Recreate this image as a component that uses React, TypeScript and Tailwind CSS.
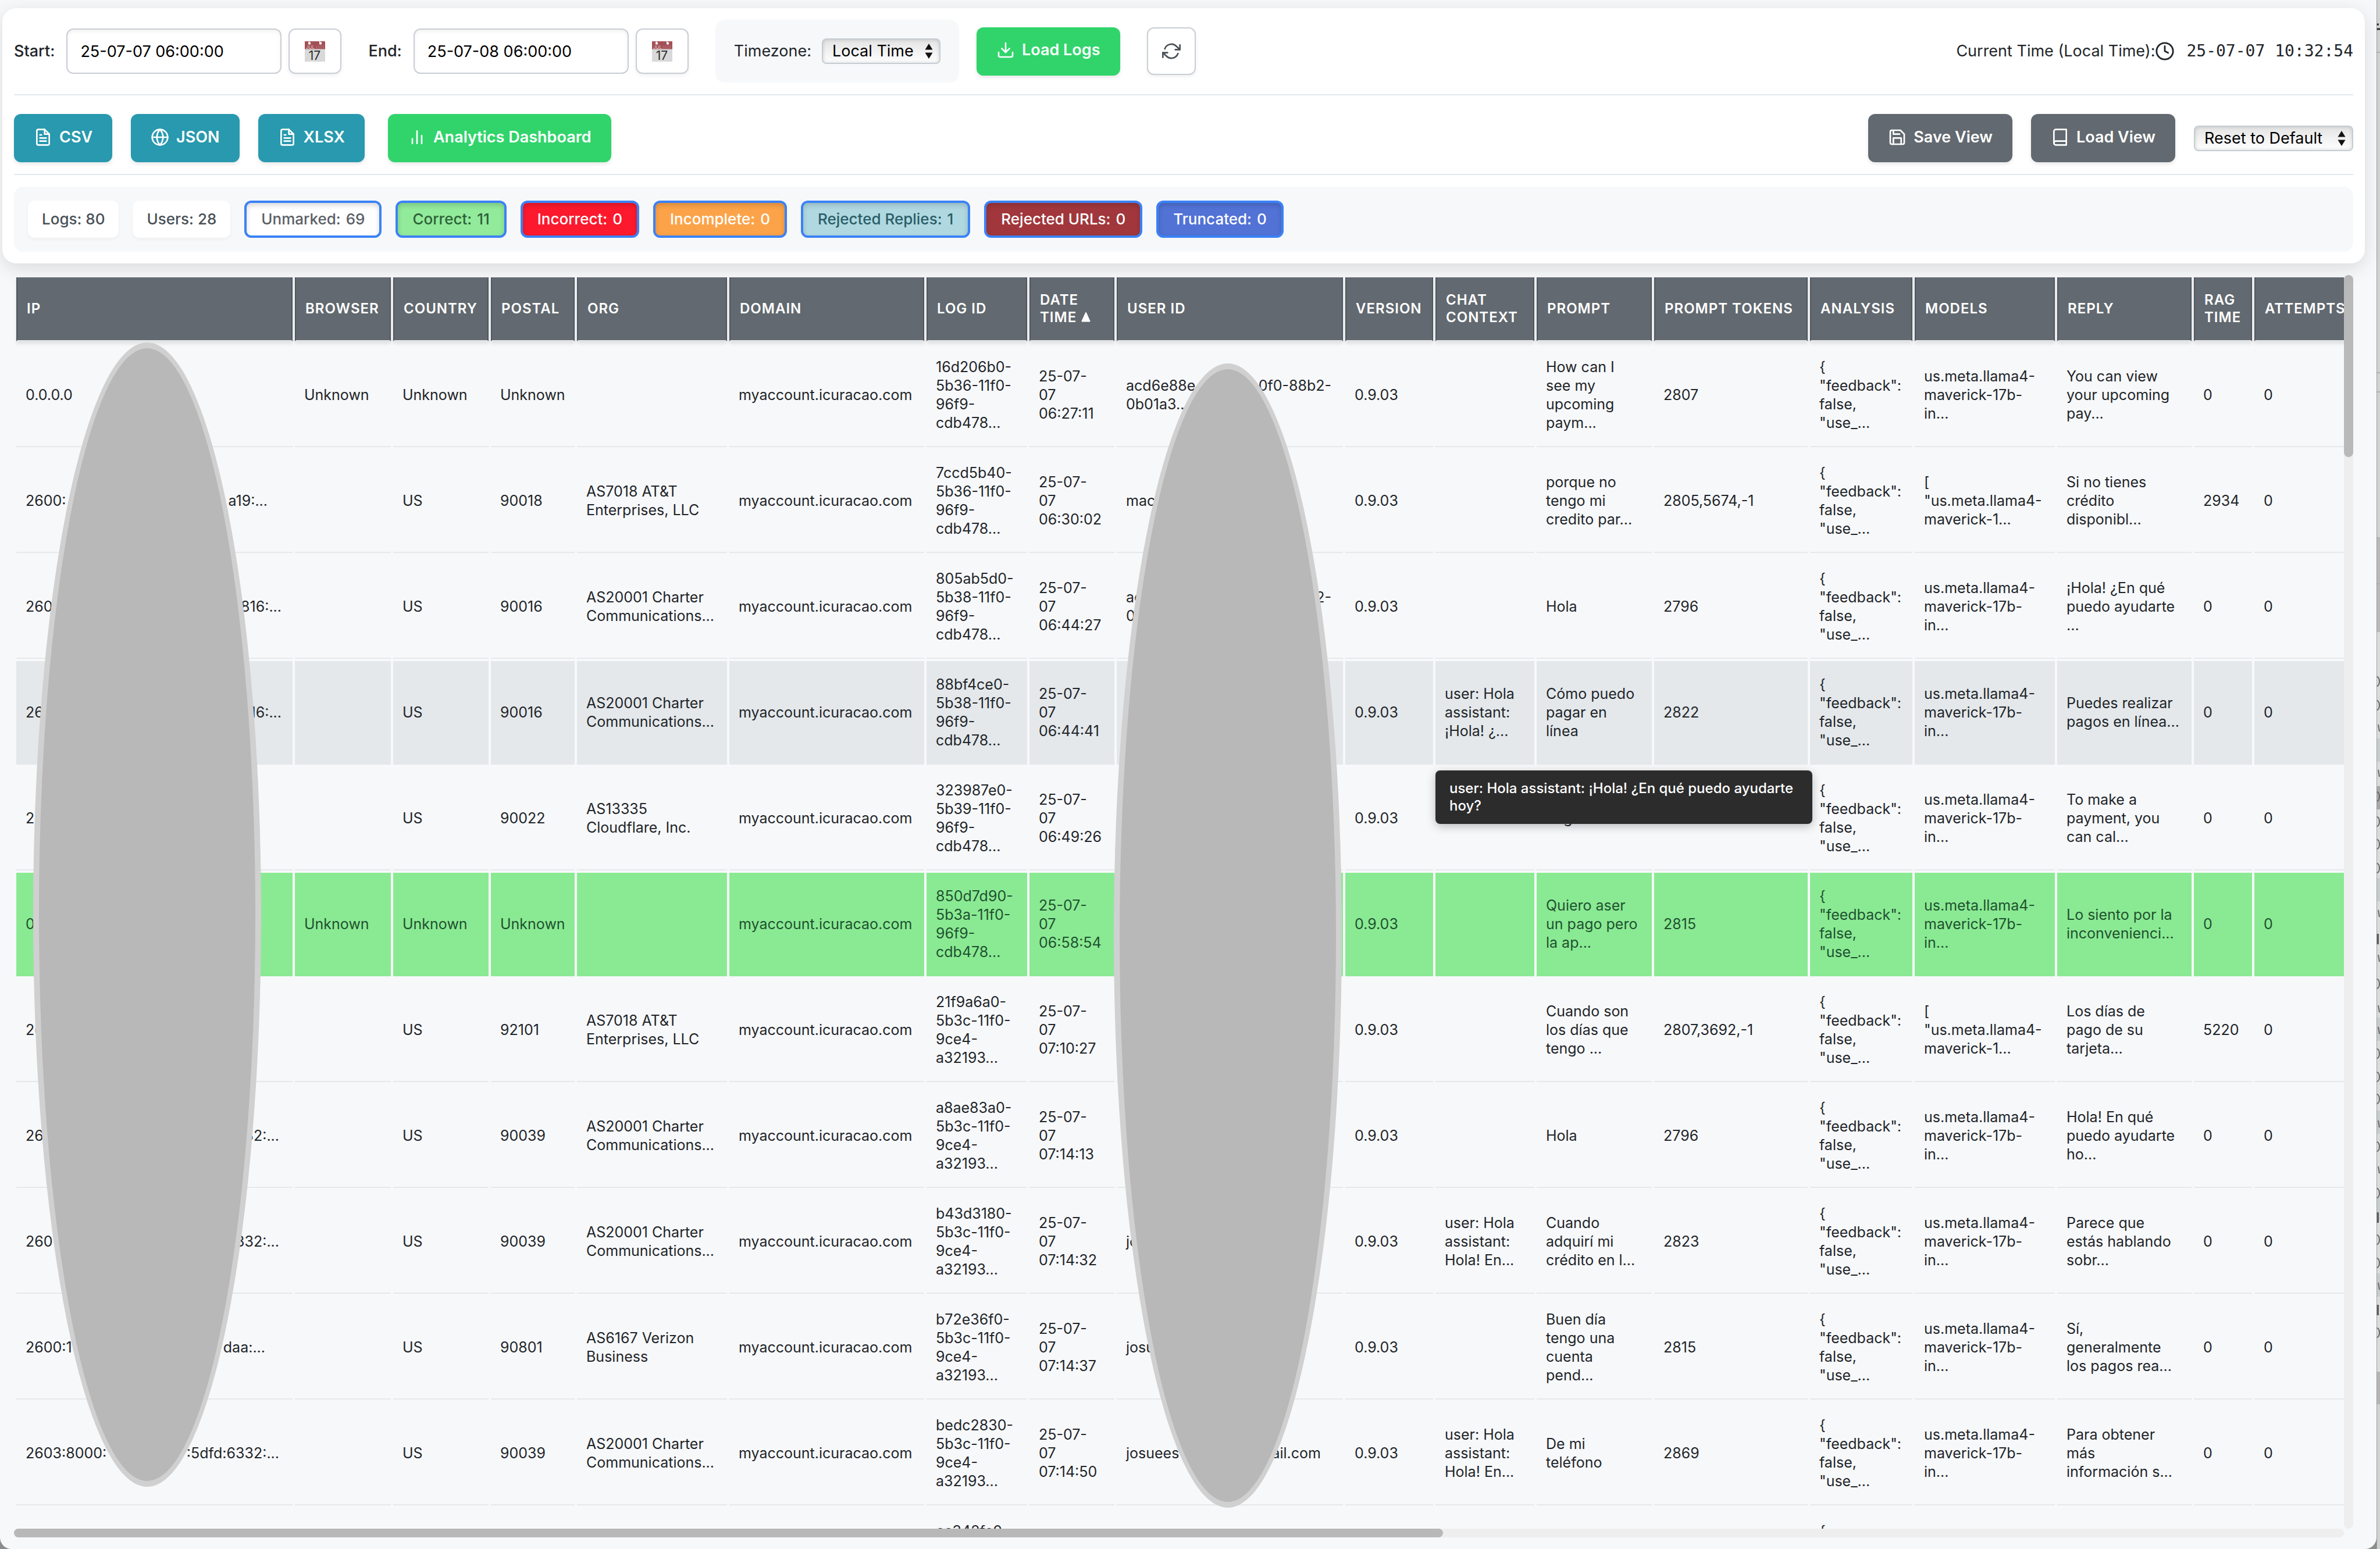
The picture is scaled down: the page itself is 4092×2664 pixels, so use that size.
import type { ReactNode } from "react";
import {
  FiBarChart2,
  FiBook,
  FiClock,
  FiDownload,
  FiFileText,
  FiGlobe,
  FiRefreshCw,
  FiSave,
} from "react-icons/fi";

type Split = { head: string; tail: string; rest?: string; width: string };
type Cell = string | Split;

const columns: { label: string; width: string; sorted?: boolean }[] = [
  { label: "IP", width: "w-[475px]" },
  { label: "Browser", width: "w-[165px]" },
  { label: "Country", width: "w-[164px]" },
  { label: "Postal", width: "w-[144px]" },
  { label: "Org", width: "w-[258px]" },
  { label: "Domain", width: "w-[335px]" },
  { label: "Log ID", width: "w-[173px]" },
  { label: "Date\nTime", width: "w-[146px]", sorted: true },
  { label: "User ID", width: "w-[389px]" },
  { label: "Version", width: "w-[151px]" },
  { label: "Chat\nContext", width: "w-[170px]" },
  { label: "Prompt", width: "w-[198px]" },
  { label: "Prompt Tokens", width: "w-[264px]" },
  { label: "Analysis", width: "w-[176px]" },
  { label: "Models", width: "w-[241px]" },
  { label: "Reply", width: "w-[231px]" },
  { label: "RAG\nTime", width: "w-[100px]" },
  { label: "Attempts", width: "w-[200px]" },
];

const analysis = '{\n"feedback":\nfalse,\n"use_...';
const llama = "us.meta.llama4-\nmaverick-17b-\nin...";
const llamaList = '[\n"us.meta.llama4-\nmaverick-1...';
const domain = "myaccount.icuracao.com";
const charter = "AS20001 Charter\nCommunications...";
const att = "AS7018 AT&T\nEnterprises, LLC";

type Row = { tone?: "hover" | "correct"; cells: Cell[] };

const rows: Row[] = [
  {
    cells: ["0.0.0.0", "Unknown", "Unknown", "Unknown", "", domain, "16d206b0-\n5b36-11f0-\n96f9-\ncdb478...", "25-07-\n07\n06:27:11",
      { head: "acd6e88e", tail: "0f0-88b2-", rest: "0b01a3...", width: "w-[353px]" },
      "0.9.03", "", "How can I\nsee my\nupcoming\npaym...", "2807", analysis, llama, "You can view\nyour upcoming\npay...", "0", "0"],
  },
  {
    cells: [{ head: "2600:", tail: "a19:...", width: "w-[416px]" }, "", "US", "90018", att, domain, "7ccd5b40-\n5b36-11f0-\n96f9-\ncdb478...", "25-07-\n07\n06:30:02", "mac",
      "0.9.03", "", "porque no\ntengo mi\ncredito par...", "2805,5674,-1", analysis, llamaList, "Si no tienes\ncrédito\ndisponibl...", "2934", "0"],
  },
  {
    cells: [{ head: "260", tail: "816:...", width: "w-[440px]" }, "", "US", "90016", charter, domain, "805ab5d0-\n5b38-11f0-\n96f9-\ncdb478...", "25-07-\n07\n06:44:27",
      { head: "ac", tail: "2-", rest: "0b0", width: "w-[353px]" },
      "0.9.03", "", "Hola", "2796", analysis, llama, "¡Hola! ¿En qué\npuedo ayudarte\n...", "0", "0"],
  },
  {
    tone: "hover",
    cells: [{ head: "260", tail: "16:...", width: "w-[440px]" }, "", "US", "90016", charter, domain, "88bf4ce0-\n5b38-11f0-\n96f9-\ncdb478...", "25-07-\n07\n06:44:41", "",
      "0.9.03", "user: Hola\nassistant:\n¡Hola! ¿...", "Cómo puedo\npagar en\nlínea", "2822", analysis, llama, "Puedes realizar\npagos en línea...", "0", "0"],
  },
  {
    cells: ["260", "", "US", "90022", "AS13335\nCloudflare, Inc.", domain, "323987e0-\n5b39-11f0-\n96f9-\ncdb478...", "25-07-\n07\n06:49:26", "",
      "0.9.03", "", "Pago", "2820", analysis, llama, "To make a\npayment, you\ncan cal...", "0", "0"],
  },
  {
    tone: "correct",
    cells: ["0.0.0.0", "Unknown", "Unknown", "Unknown", "", domain, "850d7d90-\n5b3a-11f0-\n96f9-\ncdb478...", "25-07-\n07\n06:58:54", "",
      "0.9.03", "", "Quiero aser\nun pago pero\nla ap...", "2815", analysis, llama, "Lo siento por la\ninconvenienci...", "0", "0"],
  },
  {
    cells: ["260", "", "US", "92101", att, domain, "21f9a6a0-\n5b3c-11f0-\n9ce4-\na32193...", "25-07-\n07\n07:10:27", "",
      "0.9.03", "", "Cuando son\nlos días que\ntengo ...", "2807,3692,-1", analysis, llamaList, "Los días de\npago de su\ntarjeta...", "5220", "0"],
  },
  {
    cells: [{ head: "260", tail: "32:...", width: "w-[436px]" }, "", "US", "90039", charter, domain, "a8ae83a0-\n5b3c-11f0-\n9ce4-\na32193...", "25-07-\n07\n07:14:13", "",
      "0.9.03", "", "Hola", "2796", analysis, llama, "Hola! En qué\npuedo ayudarte\nho...", "0", "0"],
  },
  {
    cells: [{ head: "260", tail: "332:...", width: "w-[436px]" }, "", "US", "90039", charter, domain, "b43d3180-\n5b3c-11f0-\n9ce4-\na32193...", "25-07-\n07\n07:14:32", "jo",
      "0.9.03", "user: Hola\nassistant:\nHola! En...", "Cuando\nadquirí mi\ncrédito en l...", "2823", analysis, llama, "Parece que\nestás hablando\nsobr...", "0", "0"],
  },
  {
    cells: [{ head: "2600:1", tail: "daa:...", width: "w-[412px]" }, "", "US", "90801", "AS6167 Verizon\nBusiness", domain, "b72e36f0-\n5b3c-11f0-\n9ce4-\na32193...", "25-07-\n07\n07:14:37", "josu",
      "0.9.03", "", "Buen día\ntengo una\ncuenta\npend...", "2815", analysis, llama, "Sí,\ngeneralmente\nlos pagos rea...", "0", "0"],
  },
  {
    cells: [{ head: "2603:8000:", tail: ":5dfd:6332:...", width: "w-[436px]" }, "", "US", "90039", charter, domain, "bedc2830-\n5b3c-11f0-\n9ce4-\na32193...", "25-07-\n07\n07:14:50",
      { head: "josuees", tail: "ail.com", width: "w-[335px]" },
      "0.9.03", "user: Hola\nassistant:\nHola! En...", "De mi\nteléfono", "2869", analysis, llama, "Para obtener\nmás\ninformación s...", "0", "0"],
  },
  {
    cells: ["", "", "", "", "", "", "cc342fc0-\n5b3c-11f0-\n9ce4-\na32193...", "", "", "", "", "", "", analysis, "", "", "", ""],
  },
];

const tones = {
  plain: "border-[#e6e8ea] text-[#212529]",
  hover: "border-[#e4e8eb] bg-[#e4e8eb] text-[#212529]",
  correct: "border-[#8aea93] bg-[#8aea93] text-[#1f5130]",
};

const pills = [
  { label: "Unmarked", count: 69, style: "bg-white text-[#5a6066]" },
  { label: "Correct", count: 11, style: "bg-[#92ea9b] text-[#2c6238]" },
  { label: "Incorrect", count: 0, style: "bg-[#fc192d] text-white" },
  { label: "Incomplete", count: 0, style: "bg-[#fca349] text-white" },
  { label: "Rejected Replies", count: 1, style: "bg-[#b0d8e1] text-[#2a5d66]" },
  { label: "Rejected URLs", count: 0, style: "bg-[#a1373c] text-white" },
  { label: "Truncated", count: 0, style: "bg-[#5272d6] text-white" },
];

function CalendarIcon() {
  return (
    <svg viewBox="0 0 35 35" className="h-[35px] w-[35px]" aria-hidden="true">
      <rect width="35" height="35" fill="#d9d9d9" />
      <rect width="35" height="13.5" fill="#a25257" />
      <circle cx="8" cy="3.5" r="2.2" fill="#fff" />
      <circle cx="27" cy="3.5" r="2.2" fill="#fff" />
      <path d="M7 0l1 3M25 0l2 3" stroke="#fff" strokeWidth="1.2" />
      <text x="2" y="12.5" fontSize="8" fontFamily="Inter, sans-serif" fill="#e5c6c8">JUL</text>
      <path d="M20 8v5M23 8v5M26 7v6M29 7v6M32 7v6" stroke="#b4686d" strokeWidth="1.4" />
      <text x="17" y="31.5" fontSize="21" textAnchor="middle" fontFamily="Inter, sans-serif" fill="#2b2b2b">17</text>
    </svg>
  );
}

function DateField({ id, label, value }: { id: string; label: string; value: string }) {
  return (
    <div className="flex items-center">
      <label htmlFor={id} className="mr-5 font-medium">{label}</label>
      <input
        id={id}
        type="text"
        defaultValue={value}
        className="h-[78px] w-[370px] rounded-xl border-2 border-[#c9ced5] bg-white px-[22px] text-black shadow-[inset_0_3px_6px_rgba(0,0,0,0.06)]"
      />
      <button
        type="button"
        aria-label={`Pick ${label} date`}
        className="ml-3 flex h-[78px] w-[91px] items-center justify-center rounded-xl border-2 border-[#c9ced5] bg-white shadow-[0_3px_6px_rgba(0,0,0,0.06)]"
      >
        <CalendarIcon />
      </button>
    </div>
  );
}

function SelectBox({ id, label, option, width }: { id: string; label: string; option: string; width: string }) {
  return (
    <div className={`relative ${width}`}>
      <select
        id={id}
        aria-label={label}
        className="block h-11 w-full appearance-none rounded-lg border-2 border-[#c5ccd3] bg-linear-to-b from-[#e4e4e4] to-white pl-4 leading-[36px] text-black shadow-[inset_0_0_6px_rgba(0,0,0,0.16)]"
      >
        <option>{option}</option>
      </select>
      <svg viewBox="0 0 14 26" className="pointer-events-none absolute top-[9px] right-[13px] h-[26px] w-[14px]" aria-hidden="true">
        <path d="M7 0l6.5 10.5H.5zM7 26l6.5-10.5H.5z" fill="#111" />
      </svg>
    </div>
  );
}

function ActionButton({ icon, color, children }: { icon: ReactNode; color: string; children: ReactNode }) {
  return (
    <button
      type="button"
      className={`flex h-[83px] items-center gap-3 rounded-xl px-[34px] pb-1 font-semibold text-white shadow-[0_3px_6px_rgba(0,0,0,0.1)] ${color}`}
    >
      {icon}
      {children}
    </button>
  );
}

function CellText({ value }: { value: Cell }) {
  if (typeof value === "string") return <>{value}</>;
  return (
    <>
      <span className={`flex justify-between ${value.width}`}>
        <span>{value.head}</span>
        <span>{value.tail}</span>
      </span>
      {value.rest}
    </>
  );
}

/** Sliver of the window lying behind this one. */
function BackWindowEdge() {
  const letters = [1172, 1213, 1370, 1413, 1452, 1493, 1692, 1812, 1852, 1890, 1972, 2052, 2132, 2172, 2292];
  const ticks = [1252, 1330, 1571, 1648, 1735, 1772, 1933, 2012, 2212];
  const blocks = [1614, 2093, 2252];
  return (
    <svg viewBox="0 0 6 2664" preserveAspectRatio="none" className="h-full w-full" aria-hidden="true">
      <rect width="6" height="2664" fill="#d0d1d1" />
      <rect y="925" width="6" height="162" fill="#b9b9b9" />
      <rect y="1087" width="6" height="1272" fill="#d9dbdb" />
      {[1270, 1510, 1750, 1910, 2060, 2190].map((y) => (
        <rect key={y} y={y} width="6" height="40" fill="#c6cbcb" />
      ))}
      <rect y="1352" width="6" height="40" fill="#a8a8a8" />
      <rect y="2359" width="6" height="56" fill="#b4b4b4" />
      <path d="M0 90h6M0 641h6M0 674h6M0 925h6M0 1004h6" stroke="#b0b0b0" strokeWidth="2" />
      <path d="M0 42h4M0 50h6" stroke="#2a2a2a" strokeWidth="3" />
      {letters.map((y) => (
        <ellipse key={y} cx="1" cy={y} rx="4" ry="8" fill="none" stroke="#6a6a6a" strokeWidth="2" />
      ))}
      {ticks.map((y) => (
        <path key={y} d={`M3 ${y - 6}l2 12`} stroke="#6a6a6a" strokeWidth="2" />
      ))}
      {blocks.map((y) => (
        <rect key={y} y={y - 8} width="4" height="18" fill="#5d5d5d" />
      ))}
      <path d="M0 0v2664" stroke="#8c8c8c" strokeWidth="1.5" />
    </svg>
  );
}

export default function App() {
  return (
    <div className="flex h-screen w-full overflow-hidden bg-[#8d8d8d] font-['Inter',sans-serif] text-[27px] leading-9 text-[#212529]">
      <div className="flex min-w-0 flex-1 flex-col rounded-b-[20px] bg-[#f7f8fa]">
        <header className="relative mt-3.5 mr-5 ml-1 rounded-[24px] bg-white px-5 py-5 shadow-[0_8px_32px_rgba(0,0,0,0.12)]">
          <div className="flex items-center justify-between border-b-2 border-[#e4e8ec] pb-5">
            <div className="flex items-center">
              <div className="flex items-center gap-[46px]">
                <DateField id="start" label="Start:" value="25-07-07 06:00:00" />
                <DateField id="end" label="End:" value="25-07-08 06:00:00" />
                <div className="flex h-[108px] items-center gap-[18px] rounded-2xl bg-[#f7f8fa] px-8">
                  <label htmlFor="timezone">Timezone:</label>
                  <SelectBox id="timezone" label="Timezone" option="Local Time" width="w-[204px]" />
                </div>
              </div>
              <div className="ml-[30px] flex items-center gap-[46px]">
                <ActionButton icon={<FiDownload size={32} />} color="bg-[#30d46b]">Load Logs</ActionButton>
                <button
                  type="button"
                  aria-label="Refresh"
                  className="flex h-[82px] w-[84px] items-center justify-center rounded-xl border-2 border-[#c9ced5] bg-white text-[#495057] shadow-[0_3px_6px_rgba(0,0,0,0.06)]"
                >
                  <FiRefreshCw size={32} />
                </button>
              </div>
            </div>
            <div className="flex items-center">
              <span>Current Time (Local Time):</span>
              <FiClock size={34} />
              <time className="ml-5 font-['DejaVu_Sans_Mono',monospace] text-[28px]">25-07-07 10:32:54</time>
            </div>
          </div>

          <div className="flex items-center justify-between border-b-2 border-[#e4e8ec] pt-8 pb-5">
            <div className="flex items-center gap-10">
              <div className="flex items-center gap-8">
                <ActionButton icon={<FiFileText size={32} />} color="bg-[#2899ae]">CSV</ActionButton>
                <ActionButton icon={<FiGlobe size={32} />} color="bg-[#2899ae]">JSON</ActionButton>
                <ActionButton icon={<FiFileText size={32} />} color="bg-[#2899ae]">XLSX</ActionButton>
              </div>
              <ActionButton icon={<FiBarChart2 size={32} />} color="bg-[#30d46b]">Analytics Dashboard</ActionButton>
            </div>
            <div className="flex items-center gap-8">
              <ActionButton icon={<FiSave size={32} />} color="bg-[#626970]">Save View</ActionButton>
              <ActionButton icon={<FiBook size={32} />} color="bg-[#626970]">Load View</ActionButton>
              <SelectBox id="view" label="View" option="Reset to Default" width="w-[274px]" />
            </div>
          </div>

          <div className="mt-5 flex items-center gap-6 rounded-2xl bg-[#f7f8fa] p-6 text-[26px] font-medium">
            <div className="flex h-16 items-center rounded-xl bg-white px-6 text-[#495057] shadow-[0_3px_6px_rgba(0,0,0,0.04)]">Logs: 80</div>
            <div className="flex h-16 items-center rounded-xl bg-white px-6 text-[#495057] shadow-[0_3px_6px_rgba(0,0,0,0.04)]">Users: 28</div>
            {pills.map((pill) => (
              <button
                key={pill.label}
                type="button"
                aria-pressed="true"
                className={`flex h-16 items-center gap-[9px] rounded-xl border-4 border-[#3b82f6] px-[25px] shadow-[inset_0_4px_8px_rgba(0,0,0,0.16)] ${pill.style}`}
              >
                <span>{pill.label}:</span>
                <span>{pill.count}</span>
              </button>
            ))}
          </div>
        </header>

        <main className="mt-5 mr-10 mb-5 ml-6 grid min-h-0 flex-1 grid-cols-[minmax(0,1fr)_16px] grid-rows-[minmax(0,1fr)_15px]">
          <div className="relative overflow-hidden">
            <table className="w-max table-fixed border-separate border-spacing-1 text-[25px] leading-8">
              <thead>
                <tr>
                  {columns.map((column) => (
                    <th
                      key={column.label}
                      scope="col"
                      className={`h-[110px] border-x-2 border-b-2 border-x-[#50575e] border-b-[#e4e8eb] bg-[#626970] px-4 text-left align-middle text-[24px] leading-[30px] font-semibold tracking-[1px] whitespace-pre text-white uppercase shadow-[0_4px_6px_rgba(0,0,0,0.1)] ${column.width}`}
                    >
                      {column.label}
                      {column.sorted && (
                        <svg viewBox="0 0 16 18" className="ml-2 inline-block h-[18px] w-4 align-baseline" role="img" aria-label="sorted ascending">
                          <path d="M8 2l6.5 14.5h-13z" fill="#fff" stroke="#fff" strokeWidth="2" strokeLinejoin="round" />
                        </svg>
                      )}
                    </th>
                  ))}
                </tr>
              </thead>
              <tbody>
                {rows.map((row, r) => (
                  <tr key={r}>
                    {row.cells.map((cell, c) => (
                      <td
                        key={c}
                        className={`h-[178px] border-b-2 px-4 align-middle whitespace-pre ${tones[row.tone ?? "plain"]}`}
                      >
                        <CellText value={cell} />
                      </td>
                    ))}
                  </tr>
                ))}
              </tbody>
            </table>

            <div className="absolute top-[116px] left-[33px] h-[1968px] w-[392px] rounded-[50%] border-10 border-[#d0d0d0] bg-[#b8b8b8]" />
            <div className="absolute top-[152px] left-[1891px] h-[1968px] w-[392px] rounded-[50%] border-10 border-[#d0d0d0] bg-[#b8b8b8]" />
            <div
              role="tooltip"
              className="absolute top-[852px] left-[2444px] w-[648px] rounded-lg bg-[#2c2c2c] px-6 py-4 text-[24px] leading-[30px] font-medium text-white shadow-[0_4px_16px_rgba(0,0,0,0.25)]"
            >
              user: Hola assistant: ¡Hola! ¿En qué puedo ayudarte hoy?
            </div>
          </div>
          <div className="rounded-full bg-[#eeeeee]">
            <div className="h-[313px] rounded-full bg-[#b9b9b9]" />
          </div>
          <div className="rounded-full bg-[#eeeeee]">
            <div className="h-full w-[2457px] rounded-full bg-[#b8b8b8]" />
          </div>
        </main>
      </div>
      <div className="w-1.5 shrink-0">
        <BackWindowEdge />
      </div>
    </div>
  );
}
